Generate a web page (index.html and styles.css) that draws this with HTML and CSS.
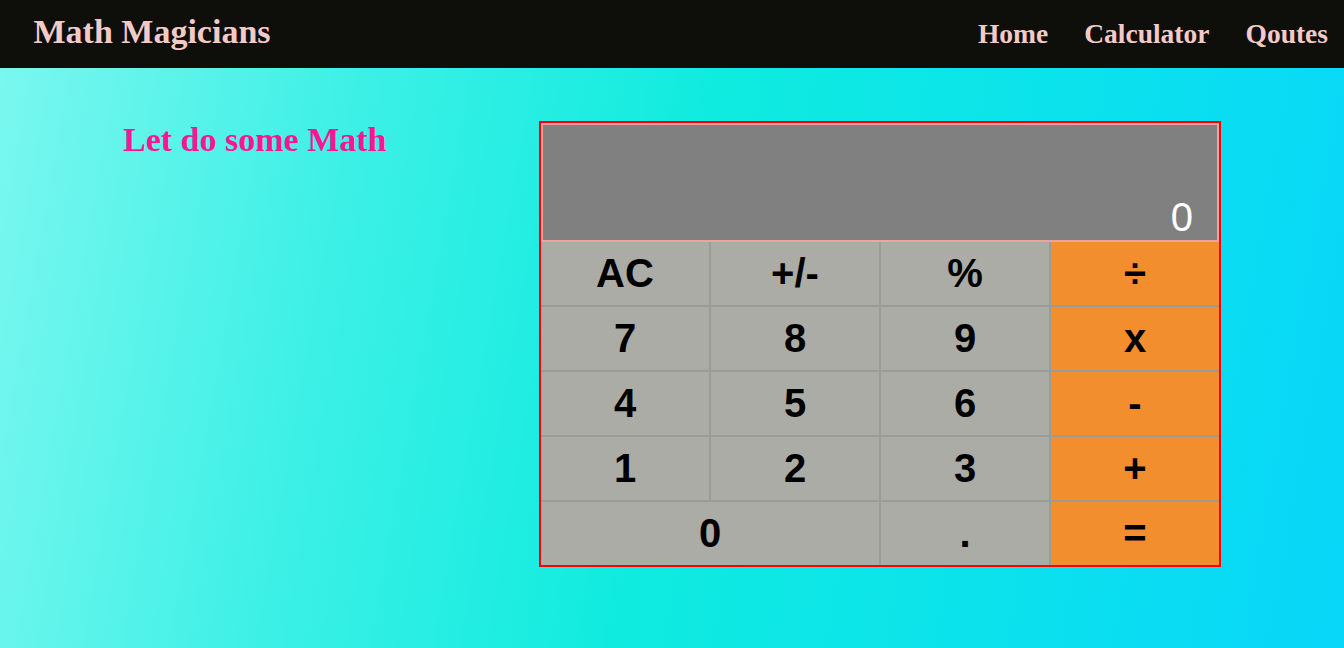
FILE: index.html
```html
<!DOCTYPE html>
<html lang="en">
<head>
<meta charset="utf-8">
<title>Math Magicians</title>
<link rel="stylesheet" href="styles.css">
</head>
<body>
<header class="navbar">
  <h1 class="logo">Math Magicians</h1>
  <nav class="nav-links">
    <a href="#" class="nav-link">Home</a>
    <a href="#" class="nav-link">Calculator</a>
    <a href="#" class="nav-link">Qoutes</a>
  </nav>
</header>
<main class="main">
  <h2 class="heading">Let do some Math</h2>
  <div class="calculator">
    <div class="display"><span class="display-value">0</span></div>
    <div class="keys">
      <button class="key">AC</button>
      <button class="key">+/-</button>
      <button class="key">%</button>
      <button class="key op">÷</button>
      <button class="key">7</button>
      <button class="key">8</button>
      <button class="key">9</button>
      <button class="key op">x</button>
      <button class="key">4</button>
      <button class="key">5</button>
      <button class="key">6</button>
      <button class="key op">-</button>
      <button class="key">1</button>
      <button class="key">2</button>
      <button class="key">3</button>
      <button class="key op">+</button>
      <button class="key zero">0</button>
      <button class="key">.</button>
      <button class="key op">=</button>
    </div>
  </div>
</main>
</body>
</html>
```
FILE: styles.css
```css
* {
  box-sizing: border-box;
}

html, body {
  margin: 0;
  padding: 0;
  height: 100%;
}

body {
  background: linear-gradient(100deg, #7cf7ef 0%, #3ef0e6 25%, #10ebdf 50%, #0be2ec 75%, #08d6f9 100%);
  font-family: "Liberation Serif", "Times New Roman", serif;
  overflow: hidden;
}

.navbar {
  height: 68px;
  background: #0e0e0a;
  display: flex;
  justify-content: space-between;
  align-items: baseline;
  padding: 15px 16px 0 33.5px;
}

.logo {
  margin: 0;
  font-size: 34px;
  line-height: 34px;
  font-weight: bold;
  color: #f3cac6;
}

.nav-links {
  display: flex;
  gap: 36px;
}

.nav-link {
  font-size: 27.5px;
  line-height: 34px;
  font-weight: bold;
  color: #f3cac6;
  text-decoration: none;
}

.main {
  display: flex;
  justify-content: space-between;
  align-items: flex-start;
  padding: 53px 123px 0 123px;
}

.heading {
  margin: 2px 0 0 0;
  font-size: 34px;
  line-height: 34px;
  font-weight: bold;
  color: #ff1493;
}

.calculator {
  width: 682px;
  border: 2px solid #ff0000;
  display: flex;
  flex-direction: column;
}

.display {
  height: 119px;
  background: #808080;
  border: 2px solid #f2a0a0;
  display: flex;
  justify-content: flex-end;
  align-items: flex-end;
  padding: 0 24px 0 0;
}

.display-value {
  font-family: "Liberation Sans", Arial, sans-serif;
  font-size: 40px;
  line-height: 46px;
  color: #ffffff;
}

.keys {
  display: grid;
  grid-template-columns: repeat(4, 1fr);
  grid-auto-rows: 63px;
  gap: 2px;
  background: #9b9b97;
}

.key {
  border: none;
  margin: 0;
  padding: 0;
  background: #abaca6;
  font-family: "Liberation Sans", Arial, sans-serif;
  font-size: 40px;
  font-weight: bold;
  color: #000000;
  display: flex;
  align-items: center;
  justify-content: center;
}

.key.op {
  background: #f38e2f;
}

.key.zero {
  grid-column: span 2;
}
```
